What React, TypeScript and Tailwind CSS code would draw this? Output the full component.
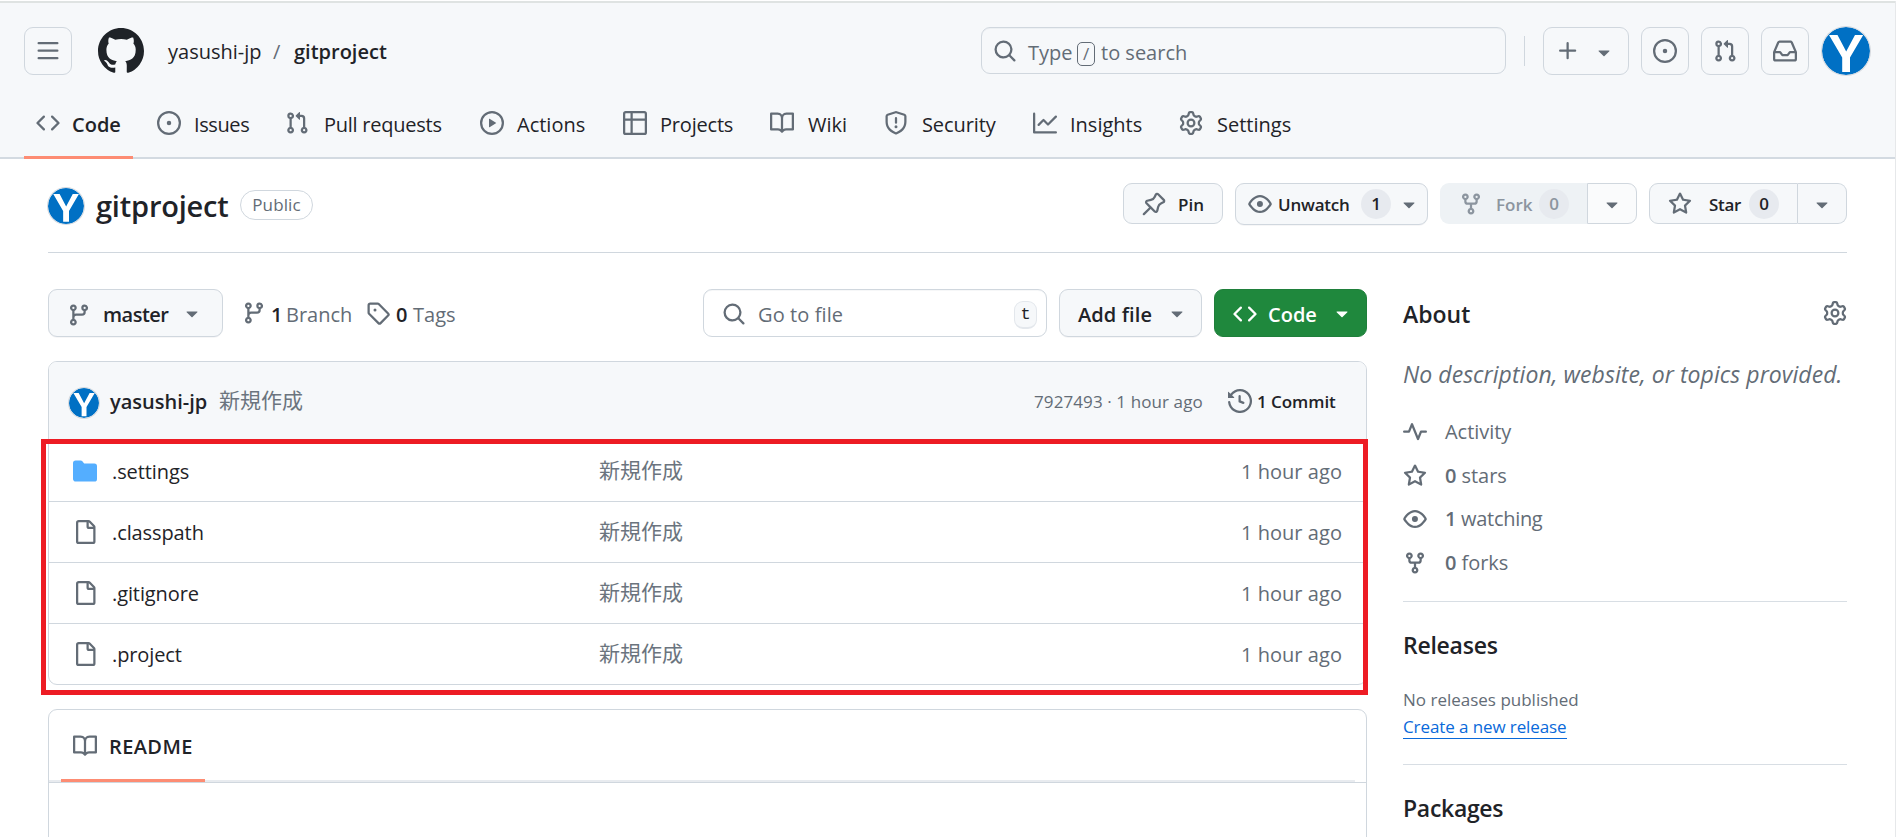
import React from "react";

const paths = {
  bars: "M1 2.75A.75.75 0 0 1 1.75 2h12.5a.75.75 0 0 1 0 1.5H1.75A.75.75 0 0 1 1 2.75Zm0 5A.75.75 0 0 1 1.75 7h12.5a.75.75 0 0 1 0 1.5H1.75A.75.75 0 0 1 1 7.75ZM1.75 12h12.5a.75.75 0 0 1 0 1.5H1.75a.75.75 0 0 1 0-1.5Z",
  github: "M8 0c4.42 0 8 3.58 8 8a8.013 8.013 0 0 1-5.45 7.59c-.4.08-.55-.17-.55-.38 0-.27.01-1.13.01-2.2 0-.75-.25-1.23-.54-1.48 1.78-.2 3.65-.88 3.65-3.95 0-.88-.31-1.59-.82-2.15.08-.2.36-1.02-.08-2.12 0 0-.67-.22-2.2.82-.64-.18-1.32-.27-2-.27-.68 0-1.36.09-2 .27-1.53-1.03-2.2-.82-2.2-.82-.44 1.1-.16 1.92-.08 2.12-.51.56-.82 1.28-.82 2.15 0 3.06 1.86 3.75 3.64 3.95-.23.2-.44.55-.51 1.07-.46.21-1.61.55-2.33-.66-.15-.24-.6-.83-1.23-.82-.67.01-.27.38.01.53.34.19.73.9.82 1.13.16.45.68 1.31 2.69.94 0 .67.01 1.3.01 1.49 0 .21-.15.45-.55.38A7.995 7.995 0 0 1 0 8c0-4.42 3.58-8 8-8Z",
  code: "m11.28 3.22 4.25 4.25a.75.75 0 0 1 0 1.06l-4.25 4.25a.749.749 0 0 1-1.275-.326.749.749 0 0 1 .215-.734L13.94 8l-3.72-3.72a.749.749 0 0 1 .326-1.275.749.749 0 0 1 .734.215Zm-6.56 0a.751.751 0 0 1 1.042.018.751.751 0 0 1 .018 1.042L2.06 8l3.72 3.72a.749.749 0 0 1-.326 1.275.749.749 0 0 1-.734-.215L.47 8.53a.75.75 0 0 1 0-1.06Z",
  issue: "M8 9.5a1.5 1.5 0 1 0 0-3 1.5 1.5 0 0 0 0 3ZM8 0a8 8 0 1 1 0 16A8 8 0 0 1 8 0ZM1.5 8a6.5 6.5 0 1 0 13 0 6.5 6.5 0 0 0-13 0Z",
  pull: "M1.5 3.25a2.25 2.25 0 1 1 3 2.122v5.256a2.251 2.251 0 1 1-1.5 0V5.372A2.25 2.25 0 0 1 1.5 3.25Zm5.677-.177L9.573.677A.25.25 0 0 1 10 .854V2.5h1A2.5 2.5 0 0 1 13.5 5v5.628a2.251 2.251 0 1 1-1.5 0V5a1 1 0 0 0-1-1h-1v1.646a.25.25 0 0 1-.427.177L7.177 3.427a.25.25 0 0 1 0-.354ZM3.75 2.5a.75.75 0 1 0 0 1.5.75.75 0 0 0 0-1.5Zm0 9.5a.75.75 0 1 0 0 1.5.75.75 0 0 0 0-1.5Zm8.25.75a.75.75 0 1 0 1.5 0 .75.75 0 0 0-1.5 0Z",
  play: "M8 0a8 8 0 1 1 0 16A8 8 0 0 1 8 0ZM1.5 8a6.5 6.5 0 1 0 13 0 6.5 6.5 0 0 0-13 0Zm4.879-2.773 4.264 2.559a.25.25 0 0 1 0 .428l-4.264 2.559A.25.25 0 0 1 6 10.559V5.442a.25.25 0 0 1 .379-.215Z",
  table: "M0 1.75C0 .784.784 0 1.75 0h12.5C15.216 0 16 .784 16 1.75v12.5A1.75 1.75 0 0 1 14.25 16H1.75A1.75 1.75 0 0 1 0 14.25ZM6.5 6.5v8h7.75a.25.25 0 0 0 .25-.25V6.5Zm8-1.5V1.75a.25.25 0 0 0-.25-.25H6.5V5Zm-13 1.5v7.75c0 .138.112.25.25.25H5v-8ZM5 5V1.5H1.75a.25.25 0 0 0-.25.25V5Z",
  book: "M0 1.75A.75.75 0 0 1 .75 1h4.253c1.227 0 2.317.59 3 1.501A3.743 3.743 0 0 1 11.006 1h4.245a.75.75 0 0 1 .75.75v10.5a.75.75 0 0 1-.75.75h-4.507a2.25 2.25 0 0 0-1.591.659l-.622.621a.75.75 0 0 1-1.06 0l-.622-.621A2.25 2.25 0 0 0 5.258 13H.75a.75.75 0 0 1-.75-.75Zm7.251 10.324.004-5.073-.002-2.253A2.25 2.25 0 0 0 5.003 2.5H1.5v9h3.757a3.75 3.75 0 0 1 1.994.574ZM8.755 4.75l-.004 7.322a3.752 3.752 0 0 1 1.992-.572H14.5v-9h-3.495a2.25 2.25 0 0 0-2.25 2.25Z",
  shield: "M7.467.133a1.748 1.748 0 0 1 1.066 0l5.25 1.68A1.75 1.75 0 0 1 15 3.48V7c0 1.566-.32 3.182-1.303 4.682-.983 1.498-2.585 2.813-5.032 3.855a1.697 1.697 0 0 1-1.33 0c-2.447-1.042-4.049-2.357-5.032-3.855C1.32 10.182 1 8.566 1 7V3.48a1.75 1.75 0 0 1 1.217-1.667Zm.61 1.429a.25.25 0 0 0-.153 0l-5.25 1.68a.25.25 0 0 0-.174.238V7c0 1.358.275 2.666 1.057 3.86.784 1.194 2.121 2.34 4.366 3.297a.196.196 0 0 0 .154 0c2.245-.956 3.582-2.104 4.366-3.298C13.225 9.666 13.5 8.36 13.5 7V3.48a.251.251 0 0 0-.174-.237l-5.25-1.68ZM8.75 4.75v3a.75.75 0 0 1-1.5 0v-3a.75.75 0 0 1 1.5 0ZM9 10.5a1 1 0 1 1-2 0 1 1 0 0 1 2 0Z",
  graph: "M1.5 1.75V13.5h13.75a.75.75 0 0 1 0 1.5H.75a.75.75 0 0 1-.75-.75V1.75a.75.75 0 0 1 1.5 0Zm14.28 2.53-5.25 5.25a.75.75 0 0 1-1.06 0L7 7.06 4.28 9.78a.751.751 0 0 1-1.042-.018.751.751 0 0 1-.018-1.042l3.25-3.25a.75.75 0 0 1 1.06 0L10 7.94l4.72-4.72a.751.751 0 0 1 1.042.018.751.751 0 0 1 .018 1.042Z",
  gear: "M8 0a8.2 8.2 0 0 1 .701.031C9.444.095 9.99.645 10.16 1.29l.288 1.107c.018.066.079.158.212.224.231.114.454.243.668.386.123.082.233.09.299.071l1.103-.303c.644-.176 1.392.021 1.82.63.27.385.506.792.704 1.218.315.675.111 1.422-.364 1.891l-.814.806c-.049.048-.098.147-.088.294.016.257.016.515 0 .772-.01.147.038.246.088.294l.814.806c.475.469.679 1.216.364 1.891a7.977 7.977 0 0 1-.704 1.217c-.428.61-1.176.807-1.82.63l-1.102-.302c-.067-.019-.177-.011-.3.071a5.909 5.909 0 0 1-.668.386c-.133.066-.194.158-.211.224l-.29 1.106c-.168.646-.715 1.196-1.458 1.26a8.006 8.006 0 0 1-1.402 0c-.743-.064-1.289-.614-1.458-1.26l-.289-1.106c-.018-.066-.079-.158-.212-.224a5.738 5.738 0 0 1-.668-.386c-.123-.082-.233-.09-.299-.071l-1.103.303c-.644.176-1.392-.021-1.82-.63a8.12 8.12 0 0 1-.704-1.218c-.315-.675-.111-1.422.363-1.891l.815-.806c.05-.048.098-.147.088-.294a6.214 6.214 0 0 1 0-.772c.01-.147-.038-.246-.088-.294l-.815-.806C.635 6.045.431 5.298.746 4.623a7.92 7.92 0 0 1 .704-1.217c.428-.61 1.176-.807 1.82-.63l1.102.302c.067.019.177.011.3-.071.214-.143.437-.272.668-.386.133-.066.194-.158.211-.224l.29-1.106C6.009.645 6.556.095 7.299.03 7.53.01 7.764 0 8 0Zm-.571 1.525c-.036.003-.108.036-.137.146l-.289 1.105c-.147.561-.549.967-.998 1.189-.173.086-.34.183-.5.29-.417.278-.97.423-1.529.27l-1.103-.303c-.109-.03-.175.016-.195.045-.22.312-.412.644-.573.99-.014.031-.021.11.059.19l.815.806c.411.406.562.957.53 1.456a4.709 4.709 0 0 0 0 .582c.032.499-.119 1.05-.53 1.456l-.815.806c-.081.08-.073.159-.059.19.162.346.353.677.573.989.02.03.085.076.195.046l1.102-.303c.56-.153 1.113-.008 1.53.27.161.107.328.204.501.29.447.222.85.629.997 1.189l.289 1.105c.029.109.101.143.137.146a6.6 6.6 0 0 0 1.142 0c.036-.003.108-.036.137-.146l.289-1.105c.147-.561.549-.967.998-1.189.173-.086.34-.183.5-.29.417-.278.97-.423 1.529-.27l1.103.303c.109.029.175-.016.195-.045.22-.313.411-.644.573-.99.014-.031.021-.11-.059-.19l-.815-.806c-.411-.406-.562-.957-.53-1.456a4.709 4.709 0 0 0 0-.582c-.032-.499.119-1.05.53-1.456l.815-.806c.081-.08.073-.159.059-.19a6.464 6.464 0 0 0-.573-.989c-.02-.03-.085-.076-.195-.046l-1.102.303c-.56.153-1.113.008-1.53-.27a4.44 4.44 0 0 0-.501-.29c-.447-.222-.85-.629-.997-1.189l-.289-1.105c-.029-.11-.101-.143-.137-.146a6.6 6.6 0 0 0-1.142 0ZM11 8a3 3 0 1 1-6 0 3 3 0 0 1 6 0ZM9.5 8a1.5 1.5 0 1 0-3.001.001A1.5 1.5 0 0 0 9.5 8Z",
  search: "M10.68 11.74a6 6 0 0 1-7.922-8.982 6 6 0 0 1 8.982 7.922l3.04 3.04a.749.749 0 0 1-.326 1.275.749.749 0 0 1-.734-.215ZM11.5 7a4.499 4.499 0 1 0-8.997 0A4.499 4.499 0 0 0 11.5 7Z",
  plus: "M7.75 2a.75.75 0 0 1 .75.75V7h4.25a.75.75 0 0 1 0 1.5H8.5v4.25a.75.75 0 0 1-1.5 0V8.5H2.75a.75.75 0 0 1 0-1.5H7V2.75A.75.75 0 0 1 7.75 2Z",
  down: "m4.427 7.427 3.396 3.396a.25.25 0 0 0 .354 0l3.396-3.396A.25.25 0 0 0 11.396 7H4.604a.25.25 0 0 0-.177.427Z",
  inbox: "M2.8 2.06A1.75 1.75 0 0 1 4.41 1h7.18c.7 0 1.333.417 1.61 1.06l2.74 6.395c.04.093.06.194.06.295v4.5A1.75 1.75 0 0 1 14.25 15H1.75A1.75 1.75 0 0 1 0 13.25v-4.5c0-.101.02-.202.06-.295Zm1.61.44a.25.25 0 0 0-.23.152L1.887 8H4.75a.75.75 0 0 1 .6.3L6.625 10h2.75l1.275-1.7a.75.75 0 0 1 .6-.3h2.863L11.82 2.652a.25.25 0 0 0-.23-.152Zm10.09 7h-2.875l-1.275 1.7a.75.75 0 0 1-.6.3h-3.5a.75.75 0 0 1-.6-.3L4.375 9.5H1.5v3.75c0 .138.112.25.25.25h12.5a.25.25 0 0 0 .25-.25Z",
  pin: "m11.294.984 3.722 3.722a1.75 1.75 0 0 1-.504 2.826l-1.327.613a3.089 3.089 0 0 0-1.707 2.084l-.584 2.454c-.317 1.332-1.972 1.8-2.94.832L5.75 11.311 1.78 15.28a.749.749 0 1 1-1.06-1.06l3.969-3.97-2.204-2.204c-.968-.968-.5-2.623.832-2.94l2.454-.584a3.08 3.08 0 0 0 2.084-1.707l.613-1.327a1.75 1.75 0 0 1 2.826-.504ZM6.283 9.723l2.732 2.731a.25.25 0 0 0 .42-.119l.584-2.454a4.586 4.586 0 0 1 2.537-3.098l1.328-.613a.25.25 0 0 0 .072-.404l-3.722-3.722a.25.25 0 0 0-.404.072l-.613 1.328a4.584 4.584 0 0 1-3.098 2.537l-2.454.584a.25.25 0 0 0-.119.42l2.731 2.732Z",
  eye: "M8 2c1.981 0 3.671.992 4.933 2.078 1.27 1.091 2.187 2.345 2.637 3.023a1.62 1.62 0 0 1 0 1.798c-.45.678-1.367 1.932-2.637 3.023C11.67 13.008 9.981 14 8 14c-1.981 0-3.671-.992-4.933-2.078C1.797 10.83.88 9.576.43 8.898a1.62 1.62 0 0 1 0-1.798c.45-.677 1.367-1.931 2.637-3.022C4.33 2.992 6.019 2 8 2ZM1.679 7.932a.12.12 0 0 0 0 .136c.411.622 1.241 1.75 2.366 2.717C5.176 11.758 6.527 12.5 8 12.5c1.473 0 2.825-.742 3.955-1.715 1.124-.967 1.954-2.096 2.366-2.717a.12.12 0 0 0 0-.136c-.412-.621-1.242-1.75-2.366-2.717C10.824 4.242 9.473 3.5 8 3.5c-1.473 0-2.825.742-3.955 1.715-1.124.967-1.954 2.096-2.366 2.717ZM8 10a2 2 0 1 1-.001-3.999A2 2 0 0 1 8 10Z",
  fork: "M5 5.372v.878c0 .414.336.75.75.75h4.5a.75.75 0 0 0 .75-.75v-.878a2.25 2.25 0 1 1 1.5 0v.878a2.25 2.25 0 0 1-2.25 2.25h-1.5v2.128a2.251 2.251 0 1 1-1.5 0V8.5h-1.5A2.25 2.25 0 0 1 3.5 6.25v-.878a2.25 2.25 0 1 1 1.5 0ZM5 3.25a.75.75 0 1 0-1.5 0 .75.75 0 0 0 1.5 0Zm6.75.75a.75.75 0 1 0 0-1.5.75.75 0 0 0 0 1.5Zm-3 8.75a.75.75 0 1 0-1.5 0 .75.75 0 0 0 1.5 0Z",
  star: "M8 .25a.75.75 0 0 1 .673.418l1.882 3.815 4.21.612a.75.75 0 0 1 .416 1.279l-3.046 2.97.719 4.192a.751.751 0 0 1-1.088.791L8 12.347l-3.766 1.98a.75.75 0 0 1-1.088-.79l.72-4.194L.818 6.374a.75.75 0 0 1 .416-1.28l4.21-.611L7.327.668A.75.75 0 0 1 8 .25Zm0 2.445L6.615 5.5a.75.75 0 0 1-.564.41l-3.097.45 2.24 2.184a.75.75 0 0 1 .216.664l-.528 3.084 2.769-1.456a.75.75 0 0 1 .698 0l2.77 1.456-.53-3.084a.75.75 0 0 1 .216-.664l2.24-2.183-3.096-.45a.75.75 0 0 1-.564-.41L8 2.694Z",
  branch: "M9.5 3.25a2.25 2.25 0 1 1 3 2.122V6A2.5 2.5 0 0 1 10 8.5H6a1 1 0 0 0-1 1v1.128a2.251 2.251 0 1 1-1.5 0V5.372a2.25 2.25 0 1 1 1.5 0v1.836A2.493 2.493 0 0 1 6 7h4a1 1 0 0 0 1-1v-.628A2.25 2.25 0 0 1 9.5 3.25Zm-6 0a.75.75 0 1 0 1.5 0 .75.75 0 0 0-1.5 0Zm8.25-.75a.75.75 0 1 0 0 1.5.75.75 0 0 0 0-1.5ZM4.25 12a.75.75 0 1 0 0 1.5.75.75 0 0 0 0-1.5Z",
  tag: "M1 7.775V2.75C1 1.784 1.784 1 2.75 1h5.025c.464 0 .91.184 1.238.513l6.25 6.25a1.75 1.75 0 0 1 0 2.474l-5.026 5.026a1.75 1.75 0 0 1-2.474 0l-6.25-6.25A1.752 1.752 0 0 1 1 7.775Zm1.5 0c0 .066.026.13.073.177l6.25 6.25a.25.25 0 0 0 .354 0l5.025-5.025a.25.25 0 0 0 0-.354l-6.25-6.25a.25.25 0 0 0-.177-.073H2.75a.25.25 0 0 0-.25.25ZM6 5a1 1 0 1 1 0 2 1 1 0 0 1 0-2Z",
  history: "m.427 1.927 1.215 1.215a8.002 8.002 0 1 1-1.6 5.685.75.75 0 1 1 1.493-.154 6.5 6.5 0 1 0 1.18-4.458l1.358 1.358A.25.25 0 0 1 3.896 6H.25A.25.25 0 0 1 0 5.75V2.104a.25.25 0 0 1 .427-.177ZM7.75 4a.75.75 0 0 1 .75.75v2.992l2.028.812a.75.75 0 0 1-.557 1.392l-2.5-1A.751.751 0 0 1 7 8.25v-3.5A.75.75 0 0 1 7.75 4Z",
  pulse: "M6 2c.306 0 .582.187.696.471L10 10.731l1.304-3.26A.751.751 0 0 1 12 7h3.25a.75.75 0 0 1 0 1.5h-2.742l-1.812 4.528a.751.751 0 0 1-1.392 0L6 4.77 4.696 8.03A.75.75 0 0 1 4 8.5H.75a.75.75 0 0 1 0-1.5h2.742l1.812-4.529A.751.751 0 0 1 6 2Z",
  file: "M2 1.75C2 .784 2.784 0 3.75 0h6.586c.464 0 .909.184 1.237.513l2.914 2.914c.329.328.513.773.513 1.237v9.586A1.75 1.75 0 0 1 13.25 16h-9.5A1.75 1.75 0 0 1 2 14.25Zm1.75-.25a.25.25 0 0 0-.25.25v12.5c0 .138.112.25.25.25h9.5a.25.25 0 0 0 .25-.25V6h-2.75A1.75 1.75 0 0 1 9 4.25V1.5Zm6.75.062V4.25c0 .138.112.25.25.25h2.688l-.011-.013-2.914-2.914-.013-.011Z",
  folder: "M1.75 1A1.75 1.75 0 0 0 0 2.75v10.5C0 14.216.784 15 1.75 15h12.5A1.75 1.75 0 0 0 16 13.25v-8.5A1.75 1.75 0 0 0 14.25 3H7.5a.25.25 0 0 1-.2-.1l-.9-1.2C6.07 1.26 5.55 1 5 1H1.75Z",
};

type IconName = keyof typeof paths;

function Icon({ name, className = "" }: { name: IconName; className?: string }) {
  return (
    <svg viewBox="0 0 16 16" className={`shrink-0 ${className.includes("size-") ? "" : "size-6"} ${className.includes("text-") ? "" : "text-[#636c76]"} ${className}`} fill="currentColor" aria-hidden="true">
      <path d={paths[name]} />
    </svg>
  );
}

function Avatar({ className }: { className: string }) {
  return (
    <svg viewBox="0 0 48 48" className={`shrink-0 rounded-full shadow-[0_0_0_1px_#d5d9de] ${className}`} aria-hidden="true">
      <circle cx="24" cy="24" r="24" fill="#0070c4" />
      <path d="M7 8h8.5l8.7 16.5L33 8h8.2L28 30.5V45h-7.8V30.5Z" fill="#fff" />
    </svg>
  );
}

const tabs: { icon: IconName; label: string; width: string; text: string }[] = [
  { icon: "code", label: "Code", width: "w-[121px]", text: "ml-3 font-semibold" },
  { icon: "issue", label: "Issues", width: "w-[128px]", text: "ml-[13px] tracking-[-0.4px]" },
  { icon: "pull", label: "Pull requests", width: "w-[195px]", text: "ml-[15px] tracking-[-0.25px]" },
  { icon: "play", label: "Actions", width: "w-[143px]", text: "ml-[13px]" },
  { icon: "table", label: "Projects", width: "w-[147px]", text: "ml-[13px] tracking-[-0.2px]" },
  { icon: "book", label: "Wiki", width: "w-[114px]", text: "ml-[14px]" },
  { icon: "shield", label: "Security", width: "w-[149px]", text: "ml-[14px] tracking-[-0.1px]" },
  { icon: "graph", label: "Insights", width: "w-[146px]", text: "ml-[13px]" },
  { icon: "gear", label: "Settings", width: "w-[150px]", text: "ml-[14px]" },
];

const files: { icon: IconName; name: string }[] = [
  { icon: "folder", name: ".settings" },
  { icon: "file", name: ".classpath" },
  { icon: "file", name: ".gitignore" },
  { icon: "file", name: ".project" },
];

const headerButton = "flex h-12 items-center rounded-[9px] border border-[#d0d7de]";

function Header() {
  return (
    <header className="h-[158px] border-t-2 border-b-2 border-t-[#dfe3e2] border-b-[#d3dae1] bg-[#f6f8fa]">
      <div className="mt-6 flex h-12 items-center pl-6">
        <button className={`${headerButton} w-12 justify-center`}><Icon name="bars" /></button>
        <Icon name="github" className="ml-[26px] size-[46px] text-[#1f2328]" />
        <span className="ml-6 w-[105px] pt-[2px]">yasushi-jp</span>
        <span className="w-[21px] pt-[2px] text-[#636c76]">/</span>
        <span className="w-[687px] pt-[2px] font-semibold">gitproject</span>
        <div className="mb-px flex h-[47px] w-[525px] items-center rounded-[9px] border border-[#d0d7de] pl-[11px] text-[#636c76] shadow-[inset_0_1px_0_rgba(208,215,222,0.25)]">
          <Icon name="search" />
          <span className="ml-[11px] w-[49px] pt-1">Type</span>
          <kbd className="mt-[6px] flex h-6 w-[18px] items-center justify-center rounded-[5px] border border-[#636c76] font-[inherit] text-[17px]">/</kbd>
          <span className="ml-[6px] pt-1">to search</span>
        </div>
        <div className="mr-[18px] ml-[18px] h-[30px] w-px bg-[#d0d7de]" />
        <button className={`${headerButton} w-[86px] pl-3`}>
          <Icon name="plus" />
          <Icon name="down" className="mt-[2px] ml-[12px]" />
        </button>
        <button className={`${headerButton} ml-3 w-12 justify-center`}><Icon name="issue" /></button>
        <button className={`${headerButton} ml-3 w-12 justify-center`}><Icon name="pull" /></button>
        <button className={`${headerButton} ml-3 w-12 justify-center`}><Icon name="inbox" /></button>
        <Avatar className="ml-[13px] size-12" />
      </div>
      <nav className="mt-4 flex pl-6">
        {tabs.map((t, i) => (
          <a key={t.label} className={`relative flex h-[68px] items-start ${t.width}`}>
            <span className="flex h-16 items-center pl-3">
              <Icon name={t.icon} />
              <span className={`pt-[3px] whitespace-nowrap ${t.text}`}>{t.label}</span>
            </span>
            {i === 0 && <span className="absolute bottom-0 left-0 h-[3px] w-[109px] bg-[#fd8c73]" />}
          </a>
        ))}
      </nav>
    </header>
  );
}

function Counter({ children }: { children: React.ReactNode }) {
  return <span className="flex h-[30px] w-[30px] items-center justify-center rounded-full bg-[#e7eaef]">{children}</span>;
}

const action = "flex h-[41px] items-center rounded-[9px] border border-[#d0d7de] bg-[#f6f8fa]";

function RepoTitle() {
  return (
    <div className="mx-12 flex h-[94px] w-[1799px] border-b border-[#d0d7de]">
      <div className="flex h-[94px] w-[1075px] items-center">
        <Avatar className="size-9" />
        <h1 className="mb-px ml-3 w-[144px] text-[29px] font-semibold tracking-[-0.2px]">gitproject</h1>
        <span className="mb-[2px] flex h-[30px] w-[73px] items-center justify-center rounded-full border border-[#d0d7de] text-[17px] font-medium tracking-[0.1px] text-[#636c76]">Public</span>
      </div>
      <div className="flex pt-6 text-[17px] font-semibold">
        <button className={`${action} w-[100px] pl-[18px]`}><Icon name="pin" /><span className="ml-3 pt-[2px]">Pin</span></button>
        <button className={`${action} ml-3 h-[42px] w-[193px] pl-3 shadow-[0_1px_0_rgba(31,35,40,0.04)]`}>
          <Icon name="eye" /><span className="ml-[6px] w-[83px] pt-px text-left tracking-[-0.2px]">Unwatch</span><Counter>1</Counter><Icon name="down" className="ml-[6px]" />
        </button>
        <div className="ml-3 flex">
          <button className="flex h-[41px] w-[147px] items-center rounded-l-[9px] bg-[#eef2f5] pl-[19px] text-[#8c959f]">
            <Icon name="fork" className="text-[#8c959f]" /><span className="ml-[13px] w-[43px] pt-[2px] text-left">Fork</span><Counter>0</Counter>
          </button>
          <button className="flex h-[41px] w-[50px] items-center justify-center rounded-r-[9px] border border-[#d0d7de] bg-[#fafbfc]"><Icon name="down" /></button>
        </div>
        <div className="ml-3 flex">
          <button className={`${action} w-[149px] rounded-r-none pl-[18px]`}>
            <Icon name="star" /><span className="ml-[17px] w-10 pt-[2px] text-left tracking-[-0.3px]">Star</span><Counter>0</Counter>
          </button>
          <button className={`${action} w-[49px] justify-center rounded-l-none border-l-0`}><Icon name="down" /></button>
        </div>
      </div>
    </div>
  );
}

const toolButton = "flex h-12 items-center rounded-[9px] border border-[#d0d7de] bg-[#f6f8fa] font-semibold shadow-[0_1px_0_rgba(31,35,40,0.04)]";

function Toolbar() {
  return (
    <div className="flex h-12 items-center">
      <button className={`${toolButton} w-[175px] pl-[18px]`}>
        <Icon name="branch" className="mt-[3px]" /><span className="ml-3 w-[72px] pt-[3px] text-left tracking-[-0.5px]">master</span><Icon name="down" className="ml-[5px]" />
      </button>
      <div className="ml-[19px] flex w-[461px] items-center text-[#636c76]">
        <Icon name="branch" className="-mt-px" />
        <b className="ml-[5px] w-[15px] pt-[3px] font-semibold text-[#1f2328]">1</b>
        <span className="w-[80px] pt-[3px]">Branch</span>
        <Icon name="tag" />
        <b className="ml-[6px] w-[17px] pt-[3px] font-semibold text-[#1f2328]">0</b>
        <span className="pt-[3px]">Tags</span>
      </div>
      <div className="flex h-12 w-[344px] items-center rounded-[9px] border border-[#d0d7de] pr-[9px] pl-[18px] text-[#636c76] shadow-[inset_0_1px_0_rgba(208,215,222,0.2)]">
        <Icon name="search" className="mt-[2px]" />
        <span className="ml-3 flex-1 pt-[3px] tracking-[0.1px]">Go to file</span>
        <kbd className="mt-1 flex h-7 w-[23px] items-center justify-center rounded-[9px] border border-b-2 border-[#e3e7ec] bg-[#f6f8fa] pt-px font-['Liberation_Mono',monospace] text-[17px] text-[#1f2328]">t</kbd>
      </div>
      <button className={`${toolButton} ml-3 w-[143px] pl-[18px]`}>
        <span className="w-[87px] pt-[3px] text-left tracking-[0.1px]">Add file</span><Icon name="down" />
      </button>
      <button className="ml-3 flex h-12 w-[153px] items-center rounded-[9px] border border-[#1f7f3b] bg-[#1f883d] pl-[18px] font-semibold text-white">
        <Icon name="code" className="mt-[2px] text-white" /><span className="ml-[11px] w-[62px] pt-[3px] text-left">Code</span><Icon name="down" className="text-white" />
      </button>
    </div>
  );
}

function FileList() {
  return (
    <section className="relative mt-6 rounded-[9px] border border-[#d0d7de]">
      <div className="flex h-[78px] items-center rounded-t-[8px] bg-[#f6f8fa] pl-5">
        <Avatar className="mt-[4px] size-[30px]" />
        <b className="ml-[11px] w-[109px] pt-px font-semibold">yasushi-jp</b>
        <span className="w-[815px] pb-[3px] text-[21px] text-[#6b747e]">新規作成</span>
        <span className="w-[194px] pt-[2px] text-[17px] tracking-[0.1px] text-[#636c76]">7927493 · 1 hour ago</span>
        <Icon name="history" />
        <b className="ml-[5px] pt-px text-[17px] font-semibold tracking-[-0.05px]">1 Commit</b>
      </div>
      {files.map((f) => (
        <div key={f.name} className="flex h-[61px] items-center border-t border-[#d0d7de] pr-[24px] pl-6">
          <Icon name={f.icon} className={f.icon === "folder" ? "text-[#54aeff]" : "text-[#636c76]"} />
          <span className="ml-[15px] w-[487px] pt-px tracking-[-0.1px]">{f.name}</span>
          <span className="flex-1 pb-[3px] text-[21px] text-[#6b747e]">新規作成</span>
          <span className="pt-px tracking-[0.05px] text-[#636c76]">1 hour ago</span>
        </div>
      ))}
      <div className="absolute top-[77px] left-[-8px] h-[256px] w-[1327px] border-[5px] border-[#ed1c24]" />
    </section>
  );
}

function Readme() {
  return (
    <section className="mt-6 h-[200px] rounded-t-[9px] border border-[#d0d7de]">
      <div className="relative flex h-[73px] items-center border-b border-[#d0d7de] pl-6">
        <Icon name="book" />
        <b className="ml-3 pt-px font-semibold tracking-[0.4px]">README</b>
        <span className="absolute bottom-0 left-0 h-[2px] w-[1306px] bg-[#e8ebef]" />
        <span className="absolute bottom-0 left-3 h-[3px] w-[144px] bg-[#fd8c73]" />
      </div>
    </section>
  );
}

function Sidebar() {
  const stats: { icon: IconName; count: string; label: string }[] = [
    { icon: "pulse", count: "", label: "Activity" },
    { icon: "star", count: "0", label: "stars" },
    { icon: "eye", count: "1", label: "watching" },
    { icon: "fork", count: "0", label: "forks" },
  ];
  return (
    <aside className="ml-9 w-[444px] text-[#636c76]">
      <div className="flex h-12 items-center justify-between">
        <h2 className="pt-[2px] text-[23px] font-semibold text-[#1f2328]">About</h2>
        <Icon name="gear" />
      </div>
      <p className="mt-[19px] h-9 text-[23px] leading-9 tracking-[0.06px] whitespace-nowrap italic">No description, website, or topics provided.</p>
      <ul className="mt-[18px]">
        {stats.map((s) => (
          <li key={s.label} className="flex h-[43.7px] items-center">
            <Icon name={s.icon} />
            <span className={`ml-[18px] ${s.label === "watching" ? "tracking-[-0.3px]" : "tracking-[-0.05px]"}`}>{s.count && <b className="font-semibold">{s.count} </b>}{s.label}</span>
          </li>
        ))}
      </ul>
      <hr className="mt-[16px] border-[#d8dee4]" />
      <h2 className="mt-[25px] h-9 text-[23px] leading-9 font-semibold tracking-[-0.25px] text-[#1f2328]">Releases</h2>
      <p className="mt-[23px] text-[17px] leading-[27px]">No releases published</p>
      <a className="flex h-[26px] w-fit items-center border-b border-[#0969da] pt-[3px] text-[17px] tracking-[-0.1px] text-[#0969da]">Create a new release</a>
      <hr className="mt-[25px] border-[#d8dee4]" />
      <h2 className="mt-[25px] h-9 text-[23px] leading-9 font-semibold tracking-[-0.3px] text-[#1f2328]">Packages</h2>
    </aside>
  );
}

export default function App() {
  return (
    <div className="h-[837px] w-full overflow-hidden bg-white pt-px font-['Open_Sans','Noto_Sans_CJK_JP',sans-serif] text-[20px] leading-[30px] text-[#1f2328]">
      <div className="h-[836px] w-full border-r border-[#e6e8ea]">
        <Header />
        <RepoTitle />
        <main className="mt-9 ml-12 flex">
          <div className="w-[1319px]">
            <Toolbar />
            <FileList />
            <Readme />
          </div>
          <Sidebar />
        </main>
      </div>
    </div>
  );
}
